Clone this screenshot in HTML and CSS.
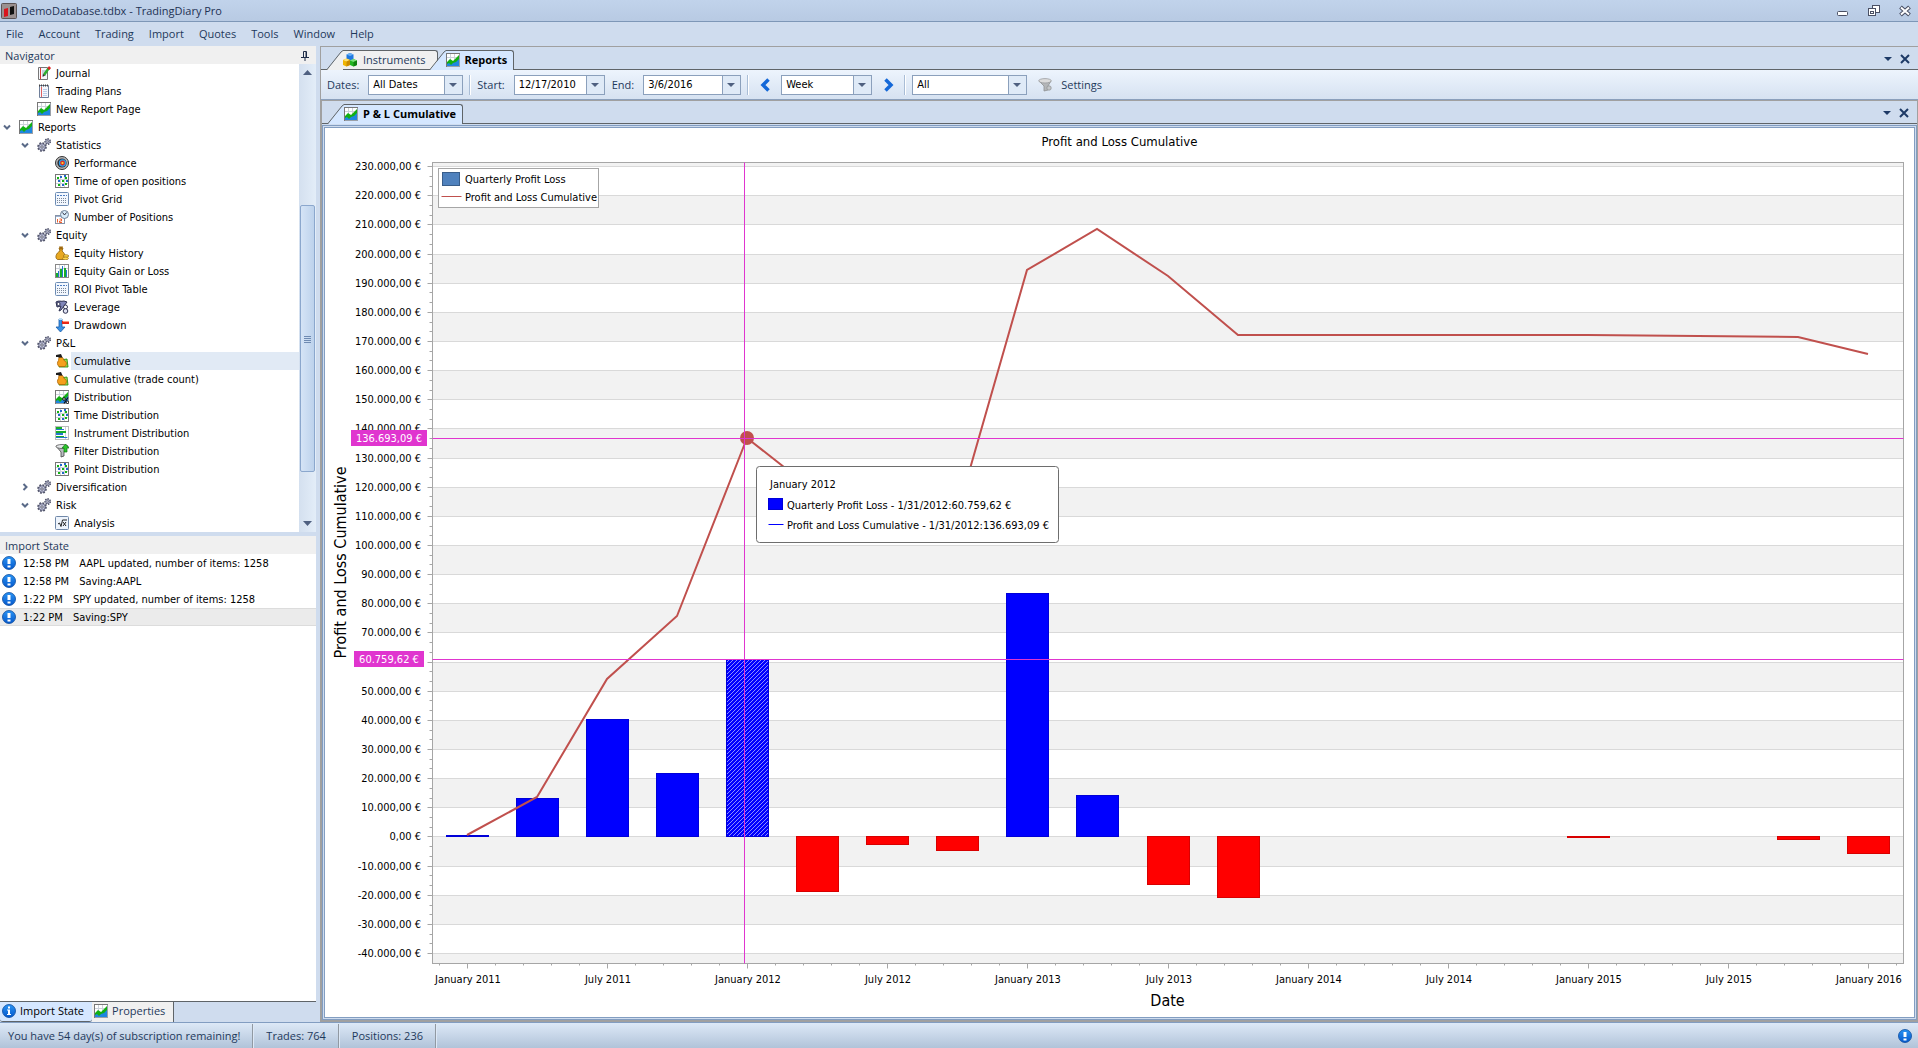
FILE: index.html
```
<!DOCTYPE html>
<html lang="en">
<head>
    <meta charset="UTF-8" />
    <meta name="viewport" content="width=device-width, initial-scale=1.0"/>
    <title>DemoDatabase.tdbx - TradingDiary Pro</title>
    <link rel="stylesheet" href="styles.css">
</head>
<body>
    <!-- icon sprite -->
    <svg class="sprite" aria-hidden="true">
        <defs>
            <linearGradient id="blueBall" x1="0" y1="0" x2="0" y2="1">
                <stop offset="0" stop-color="#2a94f4"/><stop offset="1" stop-color="#0558cc"/>
            </linearGradient>
        </defs>
        <symbol id="i-chart" viewBox="0 0 14 14">
            <rect x=".5" y=".5" width="13" height="13" fill="#fff" stroke="#9aa0a8"/>
            <path d="M4.5 1v8M8.5 1v6M1 4.5h11" stroke="#ccd2da" fill="none"/>
            <path d="M1 10l3 0 3-1 3-1 3-3v8H1z" fill="#1f86e0"/>
            <path d="M1 9l3-3 3 2 6-6v4l-3 3-3 1-2 2-2-2-2 1z" fill="#12b012"/>
            <path d="M.5 0v14M0 .5h14" stroke="#777"/>
        </symbol>
        <symbol id="i-dist" viewBox="0 0 14 14">
            <use href="#i-chart"/>
            <path d="M13 7.500L9 13.500" stroke="#111" stroke-width="1.200"/>
            <circle cx="9" cy="9" r="1.300" fill="#fff" stroke="#111"/><circle cx="12.500" cy="12.300" r="1.200" fill="#fff" stroke="#111"/>
        </symbol>
        <symbol id="i-journal" viewBox="0 0 14 14">
            <path d="M1.500 1.500h9v12h-9z" fill="#f6f8fc" stroke="#777"/>
            <path d="M3.500 2v11" stroke="#d33"/><path d="M5 5h4M5 7h4M5 9h4" stroke="#9ab"/>
            <path d="M11.500 2.500L7 9" stroke="#2fae2f" stroke-width="2.500"/>
            <path d="M12 0l2 2-1.500 2-2.200-1.500z" fill="#d22"/><path d="M6 8l2 1.500L5.500 11z" fill="#333"/>
        </symbol>
        <symbol id="i-plans" viewBox="0 0 14 14">
            <path d="M2.500 1.500h9v12h-9z" fill="#f4f7fd" stroke="#6f7f9a"/>
            <path d="M2 1.500h10" stroke="#444" stroke-width="2" stroke-dasharray="1 1"/>
            <path d="M4.500 3v10" stroke="#e06060"/><path d="M6 5.500h4M6 7.500h4M6 9.500h4M6 11.500h4" stroke="#b9cbe8"/>
        </symbol>
        <symbol id="i-gears" viewBox="0 0 14 14">
            <circle cx="5" cy="9" r="3.800" fill="#c3c6dc" stroke="#4f5268" stroke-width="2" stroke-dasharray="1.700 1.280"/>
            <circle cx="5" cy="9" r="3.200" fill="#c3c6dc" stroke="#5f627c" stroke-width=".8"/>
            <circle cx="5" cy="9" r="1.200" fill="#fff" stroke="#4f5268" stroke-width=".9"/>
            <circle cx="10.700" cy="3.500" r="2.500" fill="#c3c6dc" stroke="#4f5268" stroke-width="1.800" stroke-dasharray="1.300 .95"/>
            <circle cx="10.700" cy="3.500" r="2" fill="#c9cce0" stroke="#5f627c" stroke-width=".6"/>
            <circle cx="10.700" cy="3.500" r=".8" fill="#fff" stroke="#4f5268" stroke-width=".7"/>
        </symbol>
        <symbol id="i-target" viewBox="0 0 14 14">
            <circle cx="7" cy="7" r="6.500" fill="#b8b8b8" stroke="#333"/>
            <circle cx="7" cy="7" r="4.600" fill="#2c2c30"/><circle cx="7.500" cy="7" r="3.700" fill="#2f9ae6"/>
            <circle cx="7.500" cy="7" r="2.400" fill="#e03020"/><circle cx="7.500" cy="7" r="1.100" fill="#ffdc30"/>
        </symbol>
        <symbol id="i-points" viewBox="0 0 14 14">
            <rect x=".5" y=".5" width="13" height="13" fill="#fff" stroke="#777"/>
            <path d="M5.500 1v12M9.500 1v12M1 5.500h12M1 9.500h12" stroke="#ccd2da"/>
            <path d="M2 3h2v2H2zM7 6h2v2H7zM3 10h2v2H3zM10 3h2v2h-2zM10 9h2v2h-2z" fill="#13b213"/>
            <path d="M5 2h2v2H5zM3 6h2v2H3zM9 1h2v2H9zM7 10h2v2H7zM11 6h2v2h-2z" fill="#2468c8"/>
        </symbol>
        <symbol id="i-pivot" viewBox="0 0 14 14">
            <rect x=".5" y=".5" width="13" height="13" rx="1" fill="#f2f7fe" stroke="#6d8cb4"/>
            <path d="M2 3.500h10" stroke="#4c7cc0" stroke-dasharray="2 1"/>
            <path d="M2 6.500h10M2 8.500h10M2 10.500h10" stroke="#7a8799" stroke-dasharray="1 1"/>
        </symbol>
        <symbol id="i-calendar" viewBox="0 0 14 14">
            <rect x=".5" y="5.500" width="9" height="8" fill="#fff" stroke="#8793a8"/>
            <path d="M1 6.500h8" stroke="#9db2d0"/><path d="M2.500 9v3.500M4.500 9h2v2h-2v1.500h2.500" stroke="#ee6030" fill="none"/>
            <circle cx="9.500" cy="4.500" r="4" fill="#d8ecfa" stroke="#6f8096"/>
            <path d="M7.500 2.500l2 2.500 2-2.500" fill="none" stroke="#334"/>
        </symbol>
        <symbol id="i-money" viewBox="0 0 14 14">
            <path d="M4 2h4L7 5c4 3 4 8 1 8.500H2.500C-.5 12 1 7 5 5z" fill="#e8a820" stroke="#8a5c08" stroke-width=".8"/>
            <path d="M4 .5h4l-1 3H5z" fill="#a06a10"/>
            <ellipse cx="11" cy="10" rx="2.800" ry="1.300" fill="#ffd84a" stroke="#8a5c08" stroke-width=".6"/>
            <ellipse cx="10.500" cy="12.400" rx="3" ry="1.300" fill="#ffd84a" stroke="#8a5c08" stroke-width=".6"/>
        </symbol>
        <symbol id="i-bars" viewBox="0 0 14 14">
            <rect x=".5" y=".5" width="13" height="13" fill="#fff" stroke="#888"/>
            <path d="M4.500 1v12M9.500 1v12M1 4.500h12" stroke="#ccd2da"/>
            <path d="M1 9h2v4H1zM5 5h2v8H5zM9 4h2v9H9z" fill="#18ae28"/><path d="M3 7h1v6H3zM7 2h1v11H7zM11 6h1v7h-1z" fill="#2676d0"/>
        </symbol>
        <symbol id="i-leverage" viewBox="0 0 14 14">
            <path d="M1 2c3-2 5 0 8-1l3 1-6 8-2 1 2-5-4 1z" fill="#8086b8" stroke="#2e3150"/>
            <circle cx="3.500" cy="4" r="1.600" fill="#fff" stroke="#2e3150"/>
            <circle cx="10.500" cy="7" r="2" fill="#fff" stroke="#2e3150"/><circle cx="10.500" cy="11" r="2.300" fill="#dfe2f2" stroke="#2e3150"/>
        </symbol>
        <symbol id="i-drawdown" viewBox="0 0 14 14">
            <path d="M4 1h3v8h3l-4.500 5L1 9h3z" fill="#3a92e4" stroke="#1a5ca8" stroke-width=".8"/><path d="M4 0h3v2H4z" fill="#bcdcf6"/>
            <path d="M7 3h7v3H7z" fill="#e82818"/><path d="M8 3.500h6" stroke="#ff9a80"/>
        </symbol>
        <symbol id="i-bag" viewBox="0 0 14 14">
            <path d="M5 6l7-1 1 8H4z" fill="#9be04a" stroke="#2f8d10" stroke-width=".9"/>
            <path d="M4 3.500h3.500c1 1 1 2 1.500 3 3 1 3 4 1 6H4c-2-2-2-4-.5-6z" fill="#f5a01c" stroke="#b06406" stroke-width=".8"/>
            <path d="M1 1l5-1 1.500 3.500H3.500L3 3H1z" fill="#1c1c1c"/>
        </symbol>
        <symbol id="i-instr" viewBox="0 0 14 14">
            <rect x=".5" y=".5" width="13" height="13" fill="#fff" stroke="#bbb"/>
            <path d="M10.500 1v12M1 11.500h12" stroke="#ccd2da"/>
            <path d="M1 1h6v2H1zM1 5h10v2H1zM1 10h8v1H1z" fill="#18ae28"/><path d="M1 3h8v1H1zM1 7h7v2H1zM1 11h11v1H1z" fill="#2676d0"/>
        </symbol>
        <symbol id="i-filter" viewBox="0 0 14 14">
            <path d="M1 2l5 6v5l3-1V8l4-6z" fill="#b8bcc0" stroke="#444" stroke-width=".8"/>
            <ellipse cx="7" cy="2.500" rx="6" ry="2" fill="#e4e6e8" stroke="#555" stroke-width=".8"/>
            <path d="M10.500 0L14 4h-2v4H9V4H7z" fill="#2cc52c" stroke="#117711" stroke-width=".7"/>
        </symbol>
        <symbol id="i-funnel" viewBox="0 0 14 14">
            <path d="M1 3l5 5v5l4-1V8l3-5z" fill="#b4b6b8" stroke="#8e9092" stroke-width=".8"/>
            <ellipse cx="7" cy="2.800" rx="6.300" ry="2.200" fill="#dcdcdc" stroke="#9a9c9e" stroke-width=".8"/>
            <circle cx="11" cy="10" r="2.200" fill="#c4c6c8" stroke="#929496" stroke-width=".8"/>
        </symbol>
        <symbol id="i-root" viewBox="0 0 14 14">
            <rect x=".5" y=".5" width="13" height="13" rx="1" fill="#eef4fc" stroke="#7088a8"/>
            <path d="M3 8l1.500-1L6 10.500 7.500 4h4.500M8 6l3 4M11 6l-3 4" fill="none" stroke="#222"/>
        </symbol>
        <symbol id="i-alert" viewBox="0 0 14 14">
            <circle cx="7" cy="7" r="6.500" fill="url(#blueBall)" stroke="#0a4a9c" stroke-width=".8"/>
            <path d="M5.500 3h3v5h-3zM5.500 9.500h3v2h-3z" fill="#fff"/>
        </symbol>
        <symbol id="i-info" viewBox="0 0 14 14">
            <circle cx="7" cy="7" r="6.500" fill="url(#blueBall)" stroke="#0a4a9c" stroke-width=".8"/>
            <path d="M6 2.500h2v2H6zM5 5.500h3V10h1v1H5v-1h1V6.500H5z" fill="#fff"/>
        </symbol>
        <symbol id="i-cubes" viewBox="0 0 14 14">
            <path d="M3.500 1.500L7 0l3.500 1.500V6L7 7.500 3.500 6z" fill="#1f78e0"/><path d="M3.500 1.500L7 0l3.500 1.500L7 3z" fill="#6ab2f6"/>
            <path d="M0 7l3.500-1.500L7 7v5l-3.500 1.500L0 12z" fill="#f0b400"/><path d="M0 7l3.500-1.500L7 7 3.500 8.500z" fill="#ffe070"/><path d="M3.500 8.500L7 7v5l-3.500 1.500z" fill="#c98a00"/>
            <path d="M7 7.500L10.500 6 14 7.500v4.500L10.500 13.500 7 12z" fill="#22b522"/><path d="M7 7.500L10.500 6 14 7.500 10.500 9z" fill="#7be07b"/><path d="M10.500 9L14 7.500v4.500l-3.500 1.500z" fill="#108010"/>
        </symbol>
        <symbol id="i-close" viewBox="0 0 10 10">
            <path d="M1 1l8 8M9 1L1 9" stroke="#1e3a66" stroke-width="2" fill="none"/>
        </symbol>
        <symbol id="i-down" viewBox="0 0 8 4"><path d="M0 0h8L4 4z" fill="#1e3a66"/></symbol>
        <symbol id="i-expanded" viewBox="0 0 8 8"><path d="M1 2.500l3 3 3-3" fill="none" stroke="#5a6a88" stroke-width="2"/></symbol>
        <symbol id="i-collapsed" viewBox="0 0 8 8"><path d="M2.500 1l3 3-3 3" fill="none" stroke="#5a6a88" stroke-width="2"/></symbol>
        <symbol id="i-slant" viewBox="0 0 16 20">
            <path class="slant-fill" d="M0 20L15 1.500l1-.5v19z"/><path d="M0 19.500L14 2l2-1.500" fill="none" stroke="#5f6468"/>
        </symbol>
    </svg>

    <header class="titlebar">
        <svg class="app-icon" viewBox="0 0 16 16"><rect x=".5" y=".5" width="15" height="15" rx="1" fill="#9a9090" stroke="#5c5456"/><path d="M3 6l4-1v8l-4 1z" fill="#d8141c"/><path d="M9 4l4-1v8l-4 1z" fill="#111"/></svg>
        <h1>DemoDatabase.tdbx - TradingDiary Pro</h1>
        <div class="window-buttons">
            <button aria-label="Minimize"><svg width="12" height="12"><rect x=".5" y="6.500" width="10" height="4" rx="1" fill="#fff" stroke="#4a5064"/></svg></button>
            <button aria-label="Restore"><svg width="12" height="12"><rect x="4.500" y=".5" width="7" height="7" fill="#fff" stroke="#4a5064"/><rect x=".5" y="3.500" width="7" height="7" fill="#fff" stroke="#4a5064"/><rect x="2.500" y="6.500" width="3" height="2" fill="none" stroke="#4a5064"/></svg></button>
            <button aria-label="Close"><svg width="12" height="12"><path d="M1.500 2l9 8M10.500 2l-9 8" stroke="#4a5064" stroke-width="4"/><path d="M2 2.500l8 7M10 2.500l-8 7" stroke="#fff" stroke-width="2"/></svg></button>
        </div>
    </header>

    <nav class="menubar">
        <button>File</button><button>Account</button><button>Trading</button><button>Import</button><button>Quotes</button><button>Tools</button><button>Window</button><button>Help</button>
    </nav>

    <div class="workspace">
        <aside class="sidebar">
            <section class="navigator">
                <h2 class="pane-title">Navigator
                    <button aria-label="Auto hide"><svg width="8" height="10"><path d="M2.500 6V.5h3V6M5 1v5M0 6.500h8M4 7v3" fill="none" stroke="#1e2c48"/></svg></button>
                </h2>
                <div class="tree-wrap">
                    <ul class="tree">
                        <li class="lvl2"><svg class="icon"><use href="#i-journal"/></svg><a href="#">Journal</a></li>
                        <li class="lvl2"><svg class="icon"><use href="#i-plans"/></svg><a href="#">Trading Plans</a></li>
                        <li class="lvl2"><svg class="icon"><use href="#i-chart"/></svg><a href="#">New Report Page</a></li>
                        <li class="lvl1"><button class="toggle" aria-label="Collapse"><svg><use href="#i-expanded"/></svg></button><svg class="icon"><use href="#i-chart"/></svg><a href="#">Reports</a></li>
                        <li class="lvl2"><button class="toggle" aria-label="Collapse"><svg><use href="#i-expanded"/></svg></button><svg class="icon"><use href="#i-gears"/></svg><a href="#">Statistics</a></li>
                        <li class="lvl3"><svg class="icon"><use href="#i-target"/></svg><a href="#">Performance</a></li>
                        <li class="lvl3"><svg class="icon"><use href="#i-points"/></svg><a href="#">Time of open positions</a></li>
                        <li class="lvl3"><svg class="icon"><use href="#i-pivot"/></svg><a href="#">Pivot Grid</a></li>
                        <li class="lvl3"><svg class="icon"><use href="#i-calendar"/></svg><a href="#">Number of Positions</a></li>
                        <li class="lvl2"><button class="toggle" aria-label="Collapse"><svg><use href="#i-expanded"/></svg></button><svg class="icon"><use href="#i-gears"/></svg><a href="#">Equity</a></li>
                        <li class="lvl3"><svg class="icon"><use href="#i-money"/></svg><a href="#">Equity History</a></li>
                        <li class="lvl3"><svg class="icon"><use href="#i-bars"/></svg><a href="#">Equity Gain or Loss</a></li>
                        <li class="lvl3"><svg class="icon"><use href="#i-pivot"/></svg><a href="#">ROI Pivot Table</a></li>
                        <li class="lvl3"><svg class="icon"><use href="#i-leverage"/></svg><a href="#">Leverage</a></li>
                        <li class="lvl3"><svg class="icon"><use href="#i-drawdown"/></svg><a href="#">Drawdown</a></li>
                        <li class="lvl2"><button class="toggle" aria-label="Collapse"><svg><use href="#i-expanded"/></svg></button><svg class="icon"><use href="#i-gears"/></svg><a href="#">P&amp;L</a></li>
                        <li class="lvl3 selected"><svg class="icon"><use href="#i-bag"/></svg><a href="#">Cumulative</a></li>
                        <li class="lvl3"><svg class="icon"><use href="#i-bag"/></svg><a href="#">Cumulative (trade count)</a></li>
                        <li class="lvl3"><svg class="icon"><use href="#i-dist"/></svg><a href="#">Distribution</a></li>
                        <li class="lvl3"><svg class="icon"><use href="#i-points"/></svg><a href="#">Time Distribution</a></li>
                        <li class="lvl3"><svg class="icon"><use href="#i-instr"/></svg><a href="#">Instrument Distribution</a></li>
                        <li class="lvl3"><svg class="icon"><use href="#i-filter"/></svg><a href="#">Filter Distribution</a></li>
                        <li class="lvl3"><svg class="icon"><use href="#i-points"/></svg><a href="#">Point Distribution</a></li>
                        <li class="lvl2"><button class="toggle" aria-label="Expand"><svg><use href="#i-collapsed"/></svg></button><svg class="icon"><use href="#i-gears"/></svg><a href="#">Diversification</a></li>
                        <li class="lvl2"><button class="toggle" aria-label="Collapse"><svg><use href="#i-expanded"/></svg></button><svg class="icon"><use href="#i-gears"/></svg><a href="#">Risk</a></li>
                        <li class="lvl3"><svg class="icon"><use href="#i-root"/></svg><a href="#">Analysis</a></li>
                    </ul>
                    <div class="scrollbar">
                        <button aria-label="Scroll up"><svg width="9" height="5"><path d="M0 5h9L4.500 0z" fill="#4f6080"/></svg></button>
                        <div class="track"><div class="thumb"></div></div>
                        <button aria-label="Scroll down"><svg width="9" height="5"><path d="M0 0h9L4.500 5z" fill="#4f6080"/></svg></button>
                    </div>
                </div>
            </section>

            <section class="import-state">
                <h2 class="pane-title">Import State</h2>
                <ul class="log">
                    <li><svg class="icon"><use href="#i-alert"/></svg><time>12:58 PM</time><span>AAPL updated, number of items: 1258</span></li>
                    <li><svg class="icon"><use href="#i-alert"/></svg><time>12:58 PM</time><span>Saving:AAPL</span></li>
                    <li><svg class="icon"><use href="#i-alert"/></svg><time>1:22 PM</time><span>SPY updated, number of items: 1258</span></li>
                    <li class="current"><svg class="icon"><use href="#i-alert"/></svg><time>1:22 PM</time><span>Saving:SPY</span></li>
                </ul>
            </section>
            <div class="bottom-tabs">
                <button class="active"><svg class="icon"><use href="#i-info"/></svg>Import State</button>
                <button><svg class="icon"><use href="#i-chart"/></svg>Properties</button>
            </div>
        </aside>

        <main class="documents">
            <div class="tabstrip">
                <button class="tab"><svg class="slant"><use href="#i-slant"/></svg><span class="tab-body"><svg class="icon"><use href="#i-cubes"/></svg>Instruments</span></button>
                <button class="tab active"><svg class="slant"><use href="#i-slant"/></svg><span class="tab-body"><svg class="icon"><use href="#i-chart"/></svg>Reports</span></button>
                <div class="pane-buttons">
                    <button aria-label="Open documents"><svg width="8" height="4"><use href="#i-down"/></svg></button>
                    <button aria-label="Close document"><svg width="10" height="10"><use href="#i-close"/></svg></button>
                </div>
            </div>

            <div class="toolbar">
                <label for="dates">Dates:</label>
                <div class="combo combo-dates"><select id="dates"><option>All Dates</option></select></div>
                <div class="separator"></div>
                <label for="start">Start:</label>
                <div class="combo combo-start"><input id="start" type="text" value="12/17/2010"><button aria-label="Pick start date"></button></div>
                <label for="end">End:</label>
                <div class="combo combo-end"><input id="end" type="text" value="3/6/2016"><button aria-label="Pick end date"></button></div>
                <div class="separator"></div>
                <button class="step" aria-label="Previous"><svg width="10" height="14"><path d="M8.500 1.500L3 7l5.500 5.500" fill="none" stroke="#1468d8" stroke-width="3.500"/></svg></button>
                <div class="combo combo-week"><select aria-label="Period"><option>Week</option></select></div>
                <button class="step" aria-label="Next"><svg width="10" height="14"><path d="M1.500 1.500L7 7l-5.500 5.500" fill="none" stroke="#1468d8" stroke-width="3.500"/></svg></button>
                <div class="separator"></div>
                <div class="combo combo-all"><select aria-label="Filter"><option>All</option></select></div>
                <button class="settings"><svg class="icon"><use href="#i-funnel"/></svg>Settings</button>
            </div>

            <div class="report">
                <div class="tabstrip">
                    <button class="tab active"><svg class="slant"><use href="#i-slant"/></svg><span class="tab-body"><svg class="icon"><use href="#i-chart"/></svg>P &amp; L Cumulative</span></button>
                    <div class="pane-buttons">
                        <button aria-label="Open reports"><svg width="8" height="4"><use href="#i-down"/></svg></button>
                        <button aria-label="Close report"><svg width="10" height="10"><use href="#i-close"/></svg></button>
                    </div>
                </div>
                <div class="chart-frame">
                    <div class="chart-box"><svg id="chart" role="img" aria-label="Profit and Loss Cumulative"></svg></div>
                </div>
            </div>
        </main>
    </div>

    <footer class="statusbar">
        <span>You have 54 day(s) of subscription remaining!</span>
        <span>Trades: 764</span>
        <span>Positions: 236</span>
        <svg class="icon"><use href="#i-alert"/></svg>
    </footer>

    <script src="chart.js"></script>
</body>
</html>
```
FILE: styles.css
```
* {
    box-sizing: border-box;
}

body {
    margin: 0;
    height: 100vh;
    display: flex;
    flex-direction: column;
    overflow: hidden;
    background-color: #cfdcee;
    color: #000;
    font-family: "DejaVu Sans Condensed", Tahoma, sans-serif;
    font-size: 11px;
    line-height: 18px;
}

h1, h2, ul {
    margin: 0;
    padding: 0;
    font-size: 11px;
    font-weight: normal;
    list-style: none;
}

button, input, select {
    margin: 0;
    padding: 0;
    border: none;
    background: none;
    color: inherit;
    font: inherit;
}

a {
    color: inherit;
    text-decoration: none;
}

.sprite {
    position: absolute;
    width: 0;
    height: 0;
}

.icon {
    width: 14px;
    height: 14px;
    flex: none;
}

/* title bar and menu */
.titlebar {
    display: flex;
    align-items: center;
    gap: 4px;
    height: 22px;
    padding: 0 7px 0 1px;
    background: linear-gradient(#c1d3eb, #b8cae3);
    border-bottom: 1px solid #7e97b7;
    color: #1e3254;
}

.titlebar, .menubar, .pane-title, .tabstrip, .bottom-tabs, .statusbar, .toolbar label, .settings {
    font-family: "Open Sans", "Segoe UI", sans-serif;
}

.app-icon {
    width: 16px;
    height: 16px;
}

.window-buttons {
    display: flex;
    gap: 19px;
    margin-left: auto;
}

.window-buttons svg {
    display: block;
}

.menubar {
    display: flex;
    height: 24px;
    padding: 0 6px;
    gap: 15px;
    color: #1e395b;
}

/* left side */
.workspace {
    display: flex;
    flex: 1;
    min-height: 0;
}

.sidebar {
    display: flex;
    flex-direction: column;
    width: 316px;
    margin-right: 4px;
}

.pane-title {
    display: flex;
    justify-content: space-between;
    align-items: center;
    height: 18px;
    padding: 2px 7px 0 5px;
    background-color: #f0f0f0;
    color: #1e395b;
}

.pane-title svg {
    display: block;
}

.navigator {
    margin-bottom: 4px;
}

.tree-wrap {
    display: flex;
    background-color: #fff;
}

.tree {
    flex: 1;
}

.tree li {
    position: relative;
    display: flex;
    align-items: center;
    height: 18px;
}

.tree a {
    flex: 1;
    margin-left: 2px;
    padding: 2px 0 0 3px;
    line-height: 16px;
}

.tree .lvl1 { padding-left: 19px; }
.tree .lvl2 { padding-left: 37px; }
.tree .lvl3 { padding-left: 55px; }

.tree .selected a {
    background-color: #e1eaf5;
}

/* expander hangs in the indent of its row */
.toggle {
    position: absolute;
    margin-left: -16px;
    height: 8px;
}

.toggle svg {
    display: block;
    width: 8px;
    height: 8px;
}

.scrollbar {
    display: flex;
    flex-direction: column;
    width: 17px;
    background: linear-gradient(90deg, #d4e0ef, #e3edf8);
}

.scrollbar button {
    display: flex;
    justify-content: center;
    align-items: center;
    height: 17px;
}

.track {
    display: flex;
    flex-direction: column;
    flex: 1;
    padding: 124px 1px 43px;
}

.thumb {
    position: relative;
    flex: 1;
    border: 1px solid #8ba7cd;
    border-radius: 2px;
    background: linear-gradient(90deg, #d5e4f6, #bdd2ec);
}

.thumb::after {
    content: "";
    position: absolute;
    top: 49%;
    left: 3px;
    right: 3px;
    height: 7px;
    background: repeating-linear-gradient(#6e8ab2 0 1px, transparent 1px 2px);
}

.import-state {
    flex: 1;
    background-color: #fff;
    border-bottom: 1px solid #5f6468;
}

.log li {
    display: flex;
    align-items: center;
    height: 18px;
    padding-left: 2px;
}

.log time, .log span {
    padding-top: 2px;
    line-height: 16px;
}

.log time {
    margin: 0 10px 0 7px;
}

.log .current {
    background-color: #ebebeb;
    border: solid #dcdcdc;
    border-width: 1px 0;
}

.bottom-tabs {
    display: flex;
    height: 20px;
}

.bottom-tabs button {
    display: flex;
    align-items: center;
    gap: 4px;
    padding: 0 8px 2px 2px;
    background-color: #f0f0f0;
    border-right: 1px solid #5f6468;
    color: #1e395b;
}

.bottom-tabs .active {
    background-color: #d5e7ff;
    border-right: none;
    border-bottom: 1px solid #5f6468;
    border-radius: 0 0 3px 3px;
    color: #000;
}

/* documents */
.documents {
    display: flex;
    flex-direction: column;
    flex: 1;
    min-width: 0;
    border: solid #a0a0a0;
    border-width: 1px 0 0 1px;
}

.tabstrip {
    display: flex;
    align-items: flex-end;
    height: 23px;
    padding-left: 6px;
    border-bottom: 1px solid #5f6468;
}

.tab {
    display: flex;
    height: 19px;
    color: #1e395b;
}

.tab + .tab {
    margin-left: -8px;
}

.slant {
    width: 16px;
    height: 20px;
    fill: #f0f0f0;
}

.tab-body {
    display: flex;
    align-items: center;
    gap: 6px;
    height: 100%;
    padding-right: 11px;
    background-color: #f0f0f0;
    border: solid #5f6468;
    border-width: 1px 1px 0 0;
    border-radius: 0 3px 0 0;
}

.tab.active {
    z-index: 1;
    height: 20px;
    margin-bottom: -1px;
    color: #000;
    font-weight: bold;
}

.tab.active .tab-body {
    gap: 5px;
    padding: 0 6px 2px 0;
    background-color: #d5e7ff;
}

.tab.active .slant {
    fill: #d5e7ff;
}

.pane-buttons {
    display: flex;
    align-items: center;
    gap: 8px;
    height: 20px;
    margin-left: auto;
    padding-right: 8px;
}

.pane-buttons svg {
    display: block;
}

.toolbar {
    display: flex;
    align-items: center;
    height: 30px;
    padding-left: 6px;
    background: linear-gradient(#edf4fd, #d6e2f1);
    border-bottom: 1px solid #8ba0bc;
    color: #1e395b;
}

.combo {
    position: relative;
    display: flex;
    height: 20px;
    margin-left: 9px;
    background-color: #fff;
    border: 1px solid #8ba0bc;
    color: #000;
}

.combo-dates { width: 95px; }
.combo-start, .combo-week { width: 91px; }
.combo-end { width: 98px; }
.combo-all { width: 115px; margin-left: 0; }

.combo select, .combo input {
    width: 100%;
    min-width: 0;
    padding: 0 20px 0 4px;
    appearance: none;
    outline: none;
}

.combo input {
    padding-right: 0;
}

.combo::after {
    content: "";
    position: absolute;
    top: 7px;
    right: 5px;
    border: 4px solid transparent;
    border-top-color: #4f6080;
    border-bottom: none;
    pointer-events: none;
}

.combo::before {
    content: "";
    position: absolute;
    top: 0;
    right: 0;
    bottom: 0;
    width: 17px;
    background-color: #dfeaf7;
    border-left: 1px solid #8ba0bc;
    pointer-events: none;
}

.combo button {
    width: 17px;
    flex: none;
}

.separator {
    width: 2px;
    height: 20px;
    margin: 0 6px;
    background-color: #a9bdd6;
    border-right: 1px solid #fff;
}

.combo + label {
    margin-left: 7px;
}

.step {
    margin: 0 2px 0 5px;
}

.combo + .step {
    margin: 0 4px 0 12px;
}

.step svg {
    display: block;
}

.settings {
    display: flex;
    align-items: center;
    gap: 9px;
    margin-left: 11px;
}

.report {
    display: flex;
    flex-direction: column;
    flex: 1;
    min-height: 0;
    border: 1px solid #a0a0a0;
    border-bottom-width: 2px;
}

.chart-frame {
    display: flex;
    flex: 1;
    min-height: 0;
    margin-top: 1px;
    padding: 1px;
    border: 1px solid #829dc1;
}

.chart-box {
    flex: 1;
    min-width: 0;
    background-color: #fff;
    border: 1px solid #829dc1;
}

#chart {
    display: block;
    width: 100%;
    height: 100%;
}

.text-title { font-size: 13px; }
.text-axis { font-size: 16px; }
.text-white { fill: #fff; }
.grid { stroke: #d9d9d9; }
.axis { stroke: #a6a6a6; fill: none; }
.band { fill: #f2f2f2; }
.cross { stroke: #e035cf; }
.cross-label { fill: #e035cf; }
.curve { stroke: #c0504d; stroke-width: 2; fill: none; }
.marker { fill: #c0504d; }
.gain { fill: #00f; stroke: #0000d8; }
.loss { fill: #f00; stroke: #d80000; }
.legend-box { fill: #fff; stroke: #a6a6a6; }
.legend-swatch { fill: #4f81bd; stroke: #385d8a; }
.legend-line { stroke: #c0504d; }
.tip-box { fill: #fff; stroke: #6e6e6e; }
.tip-line { stroke: #00f; }

.statusbar {
    display: flex;
    align-items: center;
    height: 26px;
    padding: 0 6px 0 8px;
    background: linear-gradient(#dde9f7, #b1c3d9);
    border-top: 1px solid #829dc1;
    color: #1e395b;
}

.statusbar span {
    margin-right: 12px;
    padding-right: 12px;
    border-right: 2px groove #dde8f6;
    line-height: 24px;
}

.statusbar .icon {
    margin-left: auto;
}
```
FILE: chart.js
```
const svg = document.getElementById('chart');

// quarter index counted from January 2011
const bars = [
    [0, 350], [1, 13270], [2, 40300], [3, 21800], [4, 60759.62], [5, -18600],
    [6, -2700], [7, -4700], [8, 83500], [9, 14100], [10, -16200], [11, -20600],
    [16, -300], [19, -700], [20, -5700]
];
const curve = [
    [0, 350], [1, 13600], [2, 53900], [3, 75700], [4, 136693.09], [5, 118000],
    [6, 115300], [7, 110500], [8, 194200], [9, 208300], [10, 192300], [11, 172000],
    [16, 172000], [19, 171200], [20, 165600]
];
const minY = -43400;
const maxY = 231400;

function euro(value) {
    const fixed = Math.abs(value).toFixed(2).split('.');
    const whole = fixed[0].replace(/\B(?=(\d{3})+$)/g, '.');
    return (value < 0 ? '-' : '') + whole + ',' + fixed[1] + ' €';
}

function drawChart() {
    const w = svg.clientWidth;
    const h = svg.clientHeight;
    const left = 107, right = w - 11, top = 34, bottom = h - 54;
    const x = q => Math.round(left + (q + 0.5) / 21 * (right - left));
    const y = v => Math.round(top + (maxY - v) / (maxY - minY) * (bottom - top));
    const line = (x1, y1, x2, y2, cls) => `<line class="${cls}" x1="${x1 + 0.5}" y1="${y1 + 0.5}" x2="${x2 + 0.5}" y2="${y2 + 0.5}"/>`;
    const rect = (rx, ry, rw, rh, cls) => `<rect class="${cls}" x="${rx + 0.5}" y="${ry + 0.5}" width="${rw}" height="${rh}"/>`;
    const text = (tx, ty, str, anchor = 'start', cls = '') => `<text class="${cls}" x="${tx}" y="${ty}" text-anchor="${anchor}">${str}</text>`;
    let out = '<defs><pattern id="hatch" width="4" height="4" patternUnits="userSpaceOnUse"><rect width="4" height="4" fill="#00f"/><path d="M-1 1l2-2M0 4l4-4M3 5l2-2" stroke="#8c8cff"/></pattern></defs>';

    // bands and grid
    for (let v = 240000; v >= -40000; v -= 20000) {
        const y1 = Math.max(y(v), top);
        const y2 = Math.min(y(v - 10000), bottom);
        out += `<rect class="band" x="${left}" y="${y1}" width="${right - left}" height="${y2 - y1}"/>`;
    }
    for (let v = 230000; v >= -40000; v -= 10000) {
        out += line(left, y(v), right, y(v), 'grid') + line(left - 5, y(v), left, y(v), 'axis');
        out += text(96, y(v) + 4, euro(v), 'end');
        for (const part of [3333, 6667]) {
            if (v > -40000) out += line(left - 3, y(v - part), left, y(v - part), 'axis');
        }
    }
    out += rect(left, top, right - left, bottom - top, 'axis');

    // month axis
    for (let i = -1; i <= 51; i++) {
        const tick = x(i * 0.4);
        out += line(tick, bottom, tick, bottom + (i % 5 === 0 ? 5 : 2), 'axis');
        if (i % 5 === 0) {
            const label = (i % 10 === 0 ? 'January ' : 'July ') + (2011 + Math.floor(i / 10));
            out += text(tick + 1, bottom + 20, label, 'middle');
        }
    }

    for (const [q, v] of bars) {
        const y1 = Math.min(y(0), y(v));
        const box = rect(x(q) - 21, y1, 42, Math.max(1, Math.abs(y(v) - y(0))), v > 0 ? 'gain' : 'loss');
        out += q === 4 ? box.replace('/>', ' style="fill: url(#hatch)"/>') : box;
    }
    out += `<polyline class="curve" points="${curve.map(([q, v]) => x(q) + ',' + y(v)).join(' ')}"/>`;

    // crosshair
    const cx = x(4) - 3;
    out += `<circle class="marker" cx="${x(4)}" cy="${y(136693)}" r="7"/>`;
    out += line(cx, top, cx, bottom, 'cross');
    for (const [v, half] of [[136693.09, 38], [60759.62, 35]]) {
        out += line(left, y(v), right, y(v), 'cross');
        out += `<rect class="cross-label" x="${64 - half}" y="${y(v) - 8}" width="${half * 2}" height="16"/>`;
        out += text(64, y(v) + 4, euro(v), 'middle', 'text-white');
    }

    // legend
    out += rect(left + 6, top + 6, 160, 39, 'legend-box') + rect(left + 10, top + 10, 17, 13, 'legend-swatch');
    out += line(left + 9, top + 34, left + 29, top + 34, 'legend-line');
    out += text(left + 33, top + 21, 'Quarterly Profit Loss') + text(left + 33, top + 39, 'Profit and Loss Cumulative');

    // tooltip
    const tx = cx + 12, ty = y(136693) + 28;
    out += `<rect class="tip-box" x="${tx + 0.5}" y="${ty + 0.5}" width="302" height="76" rx="3"/>`;
    out += text(tx + 14, ty + 22, 'January 2012');
    out += rect(tx + 12, ty + 32, 14, 11, 'gain');
    out += text(tx + 31, ty + 43, 'Quarterly Profit Loss - 1/31/2012:' + euro(60759.62));
    out += line(tx + 12, ty + 58, tx + 27, ty + 58, 'tip-line');
    out += text(tx + 31, ty + 63, 'Profit and Loss Cumulative - 1/31/2012:' + euro(136693.09));

    // titles
    out += text(w / 2, 18, 'Profit and Loss Cumulative', 'middle', 'text-title');
    out += text((left + right) / 2, h - 11, 'Date', 'middle', 'text-axis');
    out += `<text class="text-axis" text-anchor="middle" transform="translate(21 ${(top + bottom) / 2}) rotate(-90)">Profit and Loss Cumulative</text>`;
    svg.innerHTML = out;
}

drawChart();
window.addEventListener('resize', drawChart);
```
